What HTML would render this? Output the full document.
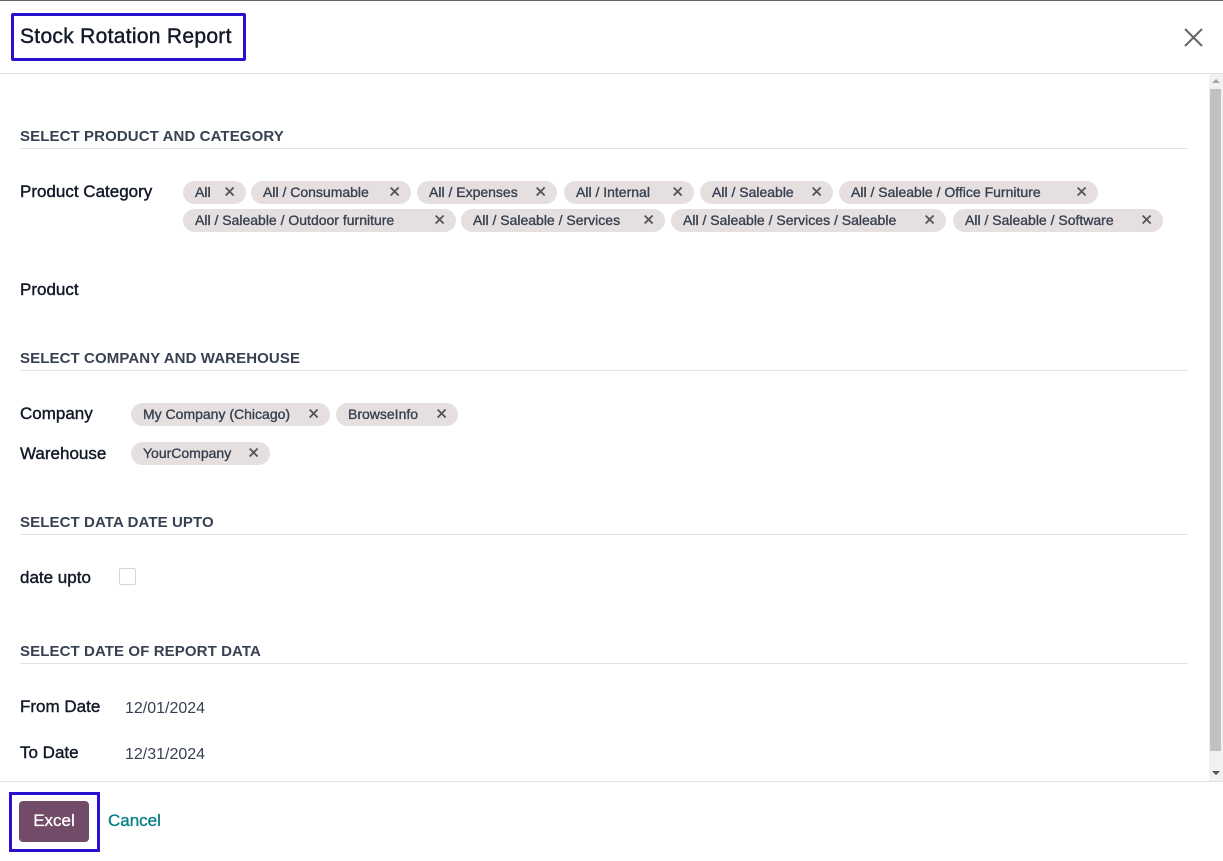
<!DOCTYPE html>
<html><head><meta charset="utf-8"><style>
*{box-sizing:border-box;margin:0;padding:0}
body{width:1223px;height:861px;background:#fff;font-family:"Liberation Sans",sans-serif;position:relative;overflow:hidden;color:#111827}
.a{position:absolute;white-space:nowrap}
.t{position:absolute;height:23px;border-radius:12px;background:#e6dfdf;color:#374151;font-size:14px;-webkit-text-stroke:0.35px #374151;line-height:23px;padding-left:12px;white-space:nowrap;overflow:hidden}
.t span{position:absolute;right:10px;top:0;font-size:15px;color:#555;-webkit-text-stroke:0.3px #555}
.h{position:absolute;left:20px;font-size:15px;font-weight:bold;color:#374151;letter-spacing:.1px}
.hr{position:absolute;left:20px;width:1168px;height:1px;background:#dee2e6}
.l{position:absolute;left:20px;font-size:17px;color:#111827;-webkit-text-stroke:0.4px #111827}
.v{position:absolute;font-size:16px;color:#374151}
</style></head><body>
<div class="a" style="left:0;top:0;width:1223px;height:1px;background:#666"></div>
<div class="a" style="left:11px;top:13px;width:235px;height:48px;border:3px solid #2a10d0;border-radius:2px"></div>
<div class="a" style="left:20px;top:25px;font-size:21px;color:#111827;-webkit-text-stroke:0.4px #111827;letter-spacing:0.3px">Stock Rotation Report</div>
<svg class="a" style="left:1184px;top:28px" width="19" height="19" viewBox="0 0 19 19"><path d="M1 1L18 18M18 1L1 18" stroke="#666" stroke-width="2"/></svg>
<div class="a" style="left:0;top:73px;width:1223px;height:1px;background:#dee2e6"></div>
<div class="a" style="left:1209px;top:74px;width:14px;height:707px;background:#f1f1f1"></div>
<div class="a" style="left:1210px;top:89px;width:11px;height:662px;background:#c1c1c1"></div>
<div class="a" style="left:1212px;top:79px;width:0;height:0;border-left:4px solid transparent;border-right:4px solid transparent;border-bottom:4px solid #a3a3a3"></div>
<div class="a" style="left:1212px;top:771px;width:0;height:0;border-left:4px solid transparent;border-right:4px solid transparent;border-top:4px solid #505050"></div>

<div class="h" style="top:128px">SELECT PRODUCT AND CATEGORY</div>
<div class="hr" style="top:148px"></div>
<div class="l" style="top:182px">Product Category</div>
<div class="t" style="left:183px;top:181px;width:63px">All<span>✕</span></div>
<div class="t" style="left:251px;top:181px;width:160px">All / Consumable<span>✕</span></div>
<div class="t" style="left:417px;top:181px;width:140px">All / Expenses<span>✕</span></div>
<div class="t" style="left:564px;top:181px;width:130px">All / Internal<span>✕</span></div>
<div class="t" style="left:700px;top:181px;width:133px">All / Saleable<span>✕</span></div>
<div class="t" style="left:839px;top:181px;width:259px">All / Saleable / Office Furniture<span>✕</span></div>
<div class="t" style="left:183px;top:209px;width:273px">All / Saleable / Outdoor furniture<span>✕</span></div>
<div class="t" style="left:461px;top:209px;width:204px">All / Saleable / Services<span>✕</span></div>
<div class="t" style="left:671px;top:209px;width:275px">All / Saleable / Services / Saleable<span>✕</span></div>
<div class="t" style="left:953px;top:209px;width:210px">All / Saleable / Software<span>✕</span></div>
<div class="l" style="top:280px">Product</div>

<div class="h" style="top:350px">SELECT COMPANY AND WAREHOUSE</div>
<div class="hr" style="top:370px"></div>
<div class="l" style="top:404px">Company</div>
<div class="t" style="left:131px;top:403px;width:199px">My Company (Chicago)<span>✕</span></div>
<div class="t" style="left:336px;top:403px;width:122px">BrowseInfo<span>✕</span></div>
<div class="l" style="top:444px">Warehouse</div>
<div class="t" style="left:131px;top:442px;width:139px">YourCompany<span>✕</span></div>

<div class="h" style="top:514px">SELECT DATA DATE UPTO</div>
<div class="hr" style="top:534px"></div>
<div class="l" style="top:568px">date upto</div>
<div class="a" style="left:119px;top:568px;width:17px;height:17px;border:1px solid #d5d5d5;border-radius:2px"></div>

<div class="h" style="top:643px">SELECT DATE OF REPORT DATA</div>
<div class="hr" style="top:663px"></div>
<div class="l" style="top:697px">From Date</div>
<div class="v" style="left:125px;top:700px">12/01/2024</div>
<div class="l" style="top:743px">To Date</div>
<div class="v" style="left:125px;top:746px">12/31/2024</div>

<div class="a" style="left:0;top:781px;width:1223px;height:1px;background:#dee2e6"></div>
<div class="a" style="left:9px;top:792px;width:91px;height:60px;border:3px solid #2a10d0"></div>
<div class="a" style="left:19px;top:801px;width:70px;height:41px;background:#714b67;border-radius:4px;color:#fff;font-size:17px;line-height:40px;text-align:center;-webkit-text-stroke:0.3px #fff">Excel</div>
<div class="a" style="left:108px;top:811px;font-size:17px;color:#017e84;-webkit-text-stroke:0.3px #017e84">Cancel</div>
</body></html>
